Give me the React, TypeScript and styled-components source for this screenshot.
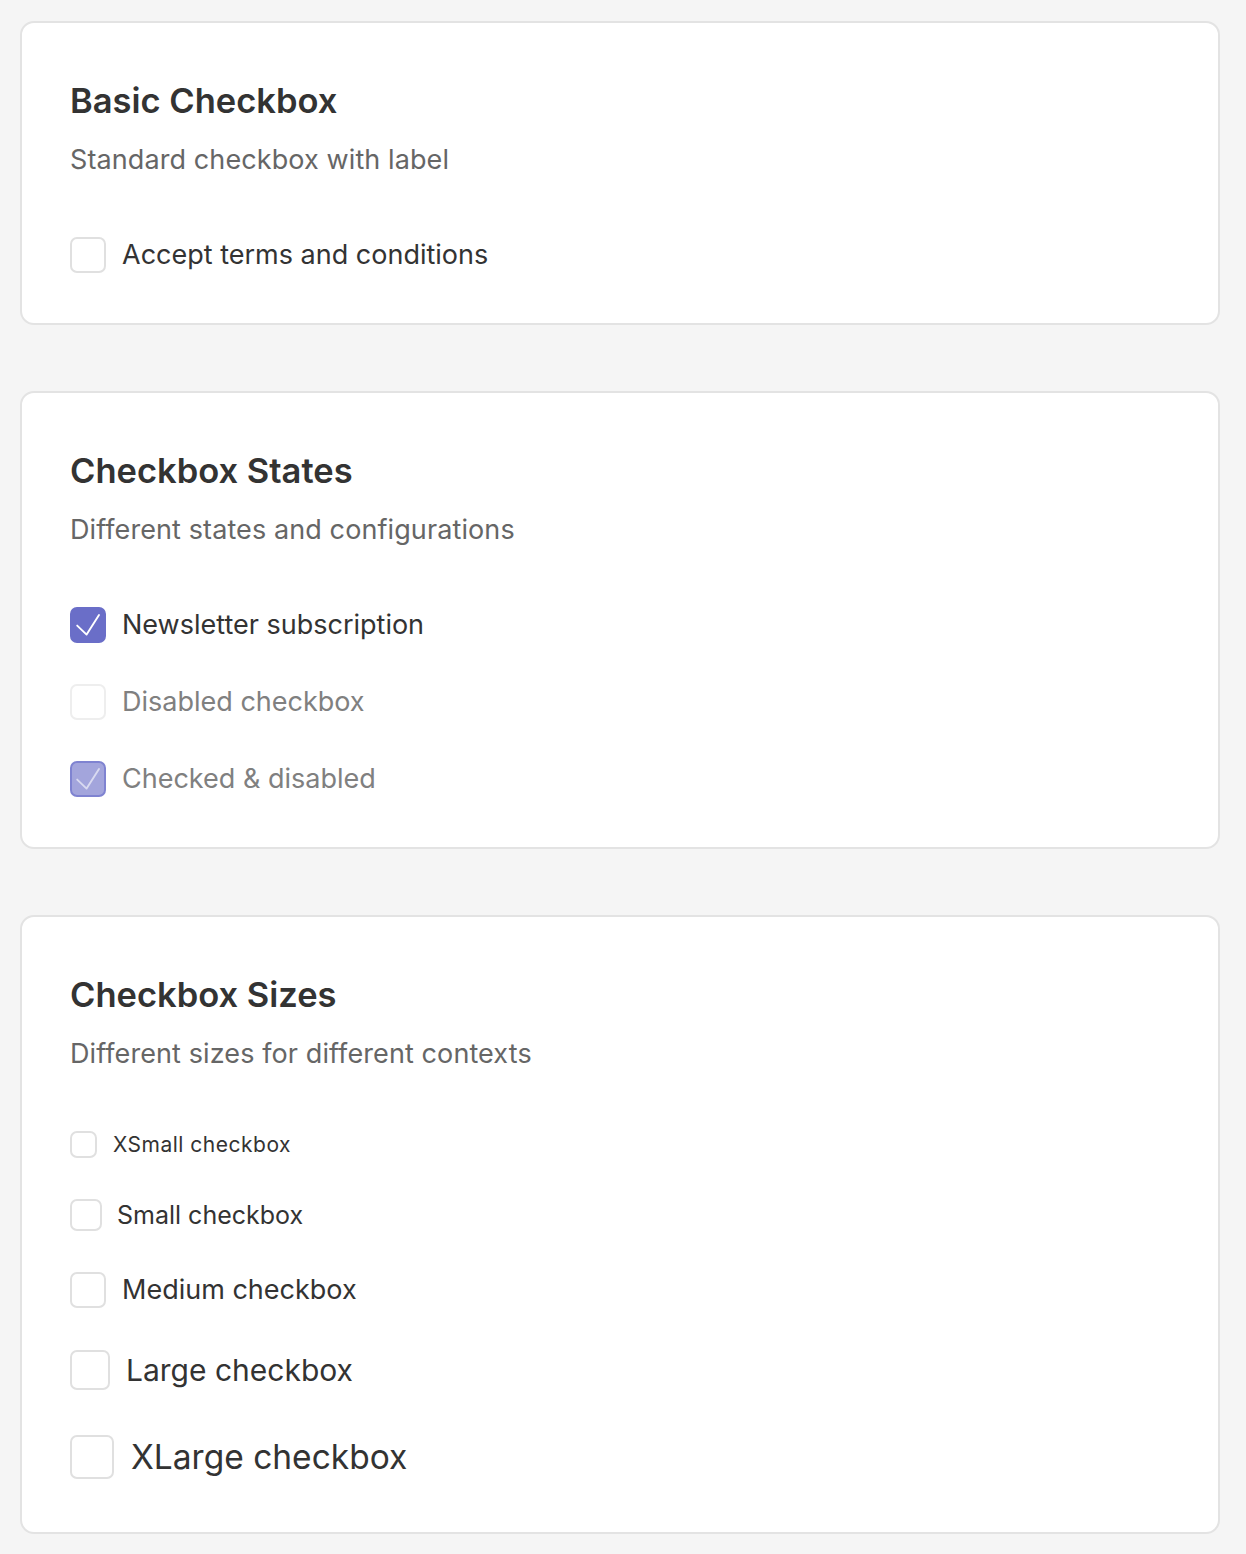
import React from "react";
import styled, { createGlobalStyle } from "styled-components";

type Size = "xs" | "sm" | "md" | "lg" | "xl";

const sizes: Record<
  Size,
  { box: number; font: number; gap: number; row: number; track: number }
> = {
  xs: { box: 27, font: 21, gap: 16, row: 27, track: 0.5 },
  sm: { box: 32, font: 25, gap: 15, row: 32, track: 0 },
  md: { box: 36, font: 27, gap: 16, row: 36, track: 0 },
  lg: { box: 40, font: 30, gap: 16, row: 42, track: 0 },
  xl: { box: 44, font: 33.5, gap: 17, row: 50, track: 0 },
};

const GlobalStyle = createGlobalStyle`
  html, body {
    margin: 0;
    padding: 0;
    background: #f5f5f5;
  }
  body {
    font-family: Inter, "Noto Sans", "Liberation Sans", sans-serif;
    color: #333;
  }
`;

interface CheckboxProps {
  label: string;
  checked?: boolean;
  disabled?: boolean;
  size?: Size;
}

function Checkbox({ label, checked, disabled, size = "md" }: CheckboxProps) {
  const s = sizes[size];
  return (
    <Row $gap={s.gap} $height={s.row} $disabled={disabled}>
      <Box $size={s.box} $checked={checked} $disabled={disabled}>
        {checked && (
          <svg
            width={s.box - 4}
            height={s.box - 4}
            viewBox="2 2 32 32"
            fill="none"
            stroke="currentColor"
            strokeWidth={1.9}
            strokeLinecap="round"
            strokeLinejoin="round"
          >
            <path d="M7.2 18.6L16.6 27.6L29 8" />
          </svg>
        )}
      </Box>
      <Label $font={s.font} $track={s.track} $disabled={disabled}>
        {label}
      </Label>
    </Row>
  );
}

export default function App() {
  return (
    <>
      <GlobalStyle />
      <Page>
        <Card>
          <Title>Basic Checkbox</Title>
          <Subtitle>Standard checkbox with label</Subtitle>
          <List>
            <Checkbox label="Accept terms and conditions" />
          </List>
        </Card>

        <Card>
          <Title>Checkbox States</Title>
          <Subtitle>Different states and configurations</Subtitle>
          <List>
            <Checkbox label="Newsletter subscription" checked />
            <Checkbox label="Disabled checkbox" disabled />
            <Checkbox label="Checked & disabled" checked disabled />
          </List>
        </Card>

        <Card>
          <Title>Checkbox Sizes</Title>
          <Subtitle>Different sizes for different contexts</Subtitle>
          <List>
            <Checkbox label="XSmall checkbox" size="xs" />
            <Checkbox label="Small checkbox" size="sm" />
            <Checkbox label="Medium checkbox" size="md" />
            <Checkbox label="Large checkbox" size="lg" />
            <Checkbox label="XLarge checkbox" size="xl" />
          </List>
        </Card>
      </Page>
    </>
  );
}

/**
 * styles
 */
const Page = styled.div`
  display: flex;
  flex-direction: column;
  gap: 66px;
  padding: 21px 26px 21px 20px;
`;

const Card = styled.section`
  background: #fff;
  border: 2px solid #e3e3e3;
  border-radius: 14px;
  padding: 58px 48px 50px;
`;

const Title = styled.h2`
  margin: 0;
  font-size: 34.5px;
  line-height: 40px;
  font-weight: 600;
  color: #333;
`;

const Subtitle = styled.p`
  margin: 21px 0 0;
  font-size: 27px;
  line-height: 36px;
  letter-spacing: 0.1px;
  color: #666;
`;

const List = styled.div`
  margin-top: 59px;
  display: flex;
  flex-direction: column;
  gap: 41px;
`;

const Row = styled.label<{ $gap: number; $height: number; $disabled?: boolean }>`
  display: flex;
  align-items: center;
  height: ${({ $height }) => $height}px;
  gap: ${({ $gap }) => $gap}px;
  cursor: ${({ $disabled }) => ($disabled ? "default" : "pointer")};
`;

const Box = styled.span<{
  $size: number;
  $checked?: boolean;
  $disabled?: boolean;
}>`
  flex: none;
  box-sizing: border-box;
  width: ${({ $size }) => $size}px;
  height: ${({ $size }) => $size}px;
  border-radius: 7px;
  display: flex;
  align-items: center;
  justify-content: center;
  border: 2px solid
    ${({ $checked, $disabled }) =>
      $checked ? ($disabled ? "#7f83d1" : "#6a6ec8") : $disabled ? "#eeeeee" : "#e0e0e0"};
  background: ${({ $checked, $disabled }) =>
    $checked ? ($disabled ? "#a3a5dc" : "#6a6ec8") : "#fff"};
  color: ${({ $disabled }) => ($disabled ? "#d9daf0" : "#fff")};
`;

const Label = styled.span<{ $font: number; $track: number; $disabled?: boolean }>`
  font-size: ${({ $font }) => $font}px;
  letter-spacing: ${({ $track }) => $track}px;
  line-height: 1.2;
  white-space: nowrap;
  color: ${({ $disabled }) => ($disabled ? "#808080" : "#333")};
`;
